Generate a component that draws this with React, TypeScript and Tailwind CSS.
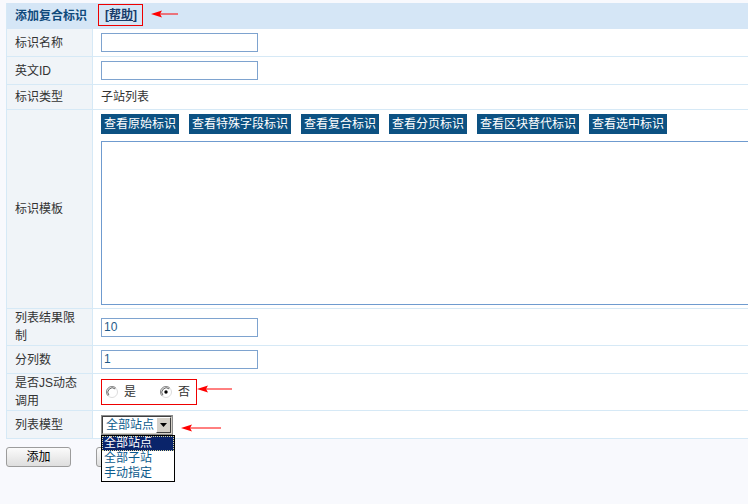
import React from "react";

function Arrow({ w }: { w: number }) {
  return (
    <svg width={w} height={8} viewBox={`0 0 ${w} 8`} className="block">
      <polygon points="0,4 11,0.5 9,4 11,7.5" fill="#ff0000" />
      <line x1="9" y1="4" x2={w} y2="4" stroke="#ff0000" strokeWidth="1" />
    </svg>
  );
}

function Radio({ checked }: { checked?: boolean }) {
  return (
    <svg width={12} height={12} viewBox="0 0 12 12" className="block">
      <circle cx="6" cy="6" r="5.5" fill="#fff" stroke="#dcdcdc" />
      <path d="M2.1 9.9 A5.5 5.5 0 0 1 9.9 2.1" fill="none" stroke="#8a8a8a" strokeWidth="1" />
      <path d="M2.9 9.1 A4.4 4.4 0 0 1 9.1 2.9" fill="none" stroke="#404040" strokeWidth="0.8" />
      {checked && <circle cx="6" cy="6" r="1.7" fill="#000" />}
    </svg>
  );
}

function Row({
  h,
  label,
  children,
  top,
}: {
  h: string;
  label: React.ReactNode;
  children?: React.ReactNode;
  top?: boolean;
}) {
  return (
    <div className={`flex border-b border-[#d6e9f6] ${h}`}>
      <div className="w-[86px] shrink-0 bg-[#f0f4f8] border-r border-[#d6e9f6] pl-[8px] pr-[8px] flex items-center leading-[18px]">
        <span>{label}</span>
      </div>
      <div className={`flex-1 bg-white pl-[8px] flex ${top ? "flex-col" : "items-center"}`}>
        {children}
      </div>
    </div>
  );
}

function TextInput({ value }: { value?: string }) {
  return (
    <div className="w-[157px] h-[19px] border border-[#7ea3cf] bg-white px-[2px] leading-[17px] text-[#1f5a8a]">
      {value}
    </div>
  );
}

const btns = ["查看原始标识", "查看特殊字段标识", "查看复合标识", "查看分页标识", "查看区块替代标识", "查看选中标识"];

export default function App() {
  return (
    <div className="w-[748px] h-[504px] overflow-hidden bg-[#f8f9fd] font-['Liberation_Sans','Noto_Sans_CJK_SC',sans-serif] text-[12px] text-[#333]">
      <div className="pt-[3px] pl-[6px]">
        <div className="w-[800px] border-l border-[#d6e9f6]">
          <div className="h-[26px] bg-[#d5e6f6] flex items-center pl-[8px]">
            <span className="font-bold text-[#0f4a7c]">添加复合标识</span>
            <span className="ml-[11px] h-[22px] border border-[#ee0000] pl-[6px] pr-[5px] flex items-center font-bold text-[#173c6a] mb-[3px]">
              [<span className="underline">帮助</span>]
            </span>
            <span className="ml-[8px] mb-[5px]">
              <Arrow w={27} />
            </span>
          </div>
          <Row h="h-[28px]" label="标识名称">
            <TextInput />
          </Row>
          <Row h="h-[28px]" label="英文ID">
            <TextInput />
          </Row>
          <Row h="h-[25px]" label="标识类型">
            <span>子站列表</span>
          </Row>
          <Row h="h-[199px]" label="标识模板" top>
            <div className="flex gap-[10px] pt-[4px]">
              {btns.map((b) => (
                <span key={b} className="h-[20px] leading-[20px] px-[3px] bg-[#0c5182] text-white">
                  {b}
                </span>
              ))}
            </div>
            <div className="mt-[7px] h-[164px] w-[680px] border border-[#6f9bcf] bg-white" />
          </Row>
          <Row h="h-[37px]" label="列表结果限制">
            <TextInput value="10" />
          </Row>
          <Row h="h-[28px]" label="分列数">
            <TextInput value="1" />
          </Row>
          <Row h="h-[37px]" label="是否JS动态调用">
            <div className="flex items-center">
              <div className="h-[26px] w-[96px] border border-[#ee0000] flex items-center pl-[4px] mt-[-1px]">
                <Radio />
                <span className="ml-[6px]">是</span>
                <span className="ml-[24px]">
                  <Radio checked />
                </span>
                <span className="ml-[6px]">否</span>
              </div>
              <span className="mb-[7px]">
                <Arrow w={35} />
              </span>
            </div>
          </Row>
          <Row h="h-[28px]" label="列表模型">
            <div className="flex items-center">
              <div className="relative w-[72px] h-[20px] border border-[#8c8c8c] bg-white">
                <div className="h-full border border-t-[#404040] border-l-[#404040] border-r-[#d4d0c8] border-b-[#d4d0c8] flex items-center">
                  <span className="pl-[3px] leading-[16px] text-[#0b5a8c] flex-1">全部站点</span>
                  <span className="w-[15px] h-[16px] bg-[#d4d0c8] border border-t-white border-l-white border-r-[#404040] border-b-[#404040] flex items-center justify-center">
                    <svg width="7" height="4" viewBox="0 0 7 4">
                      <polygon points="0,0 7,0 3.5,4" fill="#000" />
                    </svg>
                  </span>
                </div>
                <div className="absolute left-[-1px] top-[19px] w-[74px] border border-black bg-white z-10">
                  <div className="h-[15px] leading-[13px] bg-[#0a246a] text-white border border-dotted border-[#d8d8a0] pl-[1px]">全部站点</div>
                  <div className="h-[15px] leading-[15px] text-[#0b5a8c] pl-[2px]">全部子站</div>
                  <div className="h-[15px] leading-[15px] text-[#0b5a8c] pl-[2px]">手动指定</div>
                </div>
              </div>
              <span className="ml-[8px] mt-[7px]">
                <Arrow w={40} />
              </span>
            </div>
          </Row>
        </div>
        <div className="flex gap-[25px] mt-[8px]">
          <button className="w-[65px] h-[20px] border border-[#9c9c9c] rounded-[3px] bg-gradient-to-b from-[#fbfbfb] to-[#dedede] text-black text-[12px] leading-[18px]">
            添加
          </button>
          <button className="w-[65px] h-[20px] border border-[#9c9c9c] rounded-[3px] bg-gradient-to-b from-[#fbfbfb] to-[#dedede]" />
        </div>
      </div>
    </div>
  );
}
